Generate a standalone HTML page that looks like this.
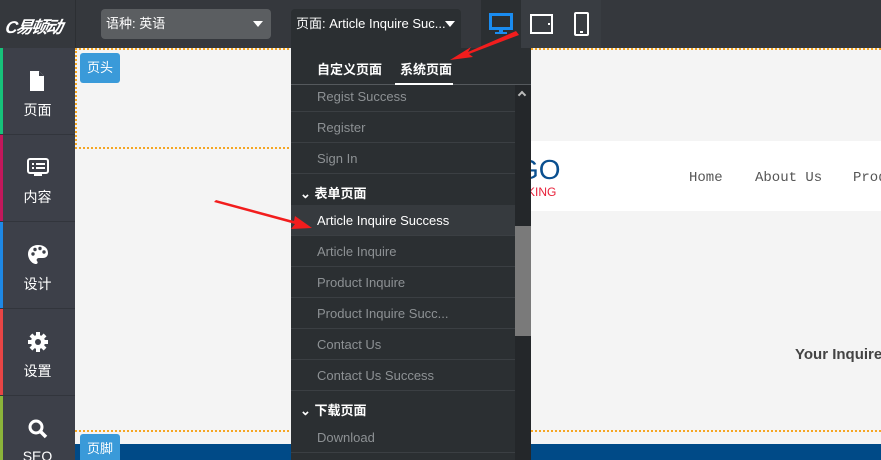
<!DOCTYPE html>
<html style="width:881px;height:460px;overflow:hidden"><head><meta charset="utf-8"><style>
*{margin:0;padding:0;box-sizing:border-box}
body{width:881px;height:460px;overflow:hidden;position:relative;background:#f4f4f4;font-family:"Liberation Sans","Noto Sans CJK SC",sans-serif}
.abs{position:absolute}
.top{left:0;top:0;width:881px;height:48px;background:#35383d}
.side{left:0;top:48px;width:75px;height:412px;background:#3d4049}
.si{position:absolute;left:0;width:75px;height:87px;border-bottom:1px solid #32353c;color:#fff;font-size:14px;text-align:center;overflow:hidden}
.si .bar{position:absolute;left:0;top:0;width:3px;height:100%}
.si svg{position:absolute;left:27px;top:22px}
.si span{position:absolute;left:0;width:75px;top:52px}
.lbl{background:#3a9ad9;color:#fff;font-size:13px;width:40px;height:30px;line-height:30px;text-align:center;border-radius:3px}
.panel{left:291px;top:48px;width:240px;height:412px;background:#2b2f32;overflow:hidden}
.it{position:absolute;left:0;width:224px;height:31px;line-height:31px;padding-left:26px;color:#8d9194;font-size:13px;border-bottom:1px solid #3b3f43}
.hd{position:absolute;left:9px;color:#fff;font-size:13px;font-weight:bold}
</style></head><body>
<div class="abs top"></div>
<div class="abs" style="left:75px;top:0;width:1px;height:48px;background:#2c2f33"></div>
<div class="abs" style="left:6px;top:13px;color:#fff;font-style:italic;font-weight:bold;font-size:17px;letter-spacing:-2px;transform:skewX(-10deg)">C<span style="font-family:'Noto Sans CJK SC'">易顿动</span></div>
<div class="abs" style="left:101px;top:9px;width:170px;height:30px;background:#5b5e61;border-radius:4px;color:#fff;font-size:13px;line-height:30px;padding-left:5px">语种: 英语<span class="abs" style="right:8px;top:12px;border:5px solid transparent;border-top:6px solid #fff;border-bottom:0"></span></div>
<div class="abs" style="left:291px;top:9px;width:170px;height:40px;background:#2b2f32;border-radius:4px 4px 0 0;color:#fff;font-size:13px;line-height:30px;padding-left:5px">页面: Article Inquire Suc...<span class="abs" style="right:6px;top:12px;border:5px solid transparent;border-top:6px solid #fff;border-bottom:0"></span></div>
<div class="abs" style="left:481px;top:0;width:40px;height:48px;background:#2b2f32"></div>
<div class="abs" style="left:521px;top:0;width:80px;height:48px;background:#393d42"></div>
<svg class="abs" style="left:489px;top:13px" width="26" height="22"><rect x="1.5" y="1.5" width="21" height="14" fill="none" stroke="#1a8cf0" stroke-width="3"/><rect x="10" y="16" width="4" height="3" fill="#1a8cf0"/><rect x="6" y="19" width="12" height="2" fill="#1a8cf0"/></svg>
<svg class="abs" style="left:530px;top:14px" width="24" height="20"><rect x="1" y="1" width="21" height="18" fill="none" stroke="#fff" stroke-width="2"/><rect x="18" y="9" width="2" height="2" fill="#fff"/></svg>
<svg class="abs" style="left:574px;top:12px" width="16" height="24"><rect x="1" y="1" width="13" height="22" rx="1" fill="none" stroke="#fff" stroke-width="2"/><rect x="2" y="4" width="11" height="14" fill="#393d42"/><rect x="6" y="19" width="3" height="2" fill="#fff"/></svg>
<div class="abs side"></div>
<div class="si" style="top:48px"><div class="bar" style="background:#17c27a"></div><svg width="20" height="22"><path d="M3 1h9l5 5v15H3z" fill="#fff"/><path d="M12 1v5h5" fill="#3d4049"/></svg><span>页面</span></div>
<div class="si" style="top:135px"><div class="bar" style="background:#c2185b"></div><svg width="22" height="22"><rect x="1" y="2" width="20" height="14" rx="2" fill="none" stroke="#fff" stroke-width="2"/><rect x="5" y="6" width="2" height="2" fill="#fff"/><rect x="9" y="6" width="9" height="2" fill="#fff"/><rect x="5" y="10" width="2" height="2" fill="#fff"/><rect x="9" y="10" width="9" height="2" fill="#fff"/><rect x="7" y="17" width="8" height="2" fill="#fff"/></svg><span>内容</span></div>
<div class="si" style="top:222px"><div class="bar" style="background:#1e88e5"></div><svg width="22" height="22"><path d="M11 1C5 1 1 5 1 10c0 5 4 10 8 10 2 0 2-2 1-3s0-3 2-3h4c3 0 5-2 5-5 0-5-4-8-10-8z" fill="#fff"/><circle cx="6" cy="10" r="1.7" fill="#3d4049"/><circle cx="8" cy="5.5" r="1.7" fill="#3d4049"/><circle cx="13" cy="4.5" r="1.7" fill="#3d4049"/><circle cx="17" cy="8" r="1.7" fill="#3d4049"/></svg><span>设计</span></div>
<div class="si" style="top:309px"><div class="bar" style="background:#e84545"></div><svg width="22" height="22"><g transform="translate(11 11)" fill="#fff"><circle r="7"/><rect x="-2" y="-10" width="4" height="20"/><rect x="-2" y="-10" width="4" height="20" transform="rotate(45)"/><rect x="-2" y="-10" width="4" height="20" transform="rotate(90)"/><rect x="-2" y="-10" width="4" height="20" transform="rotate(135)"/><circle r="3" fill="#3d4049"/></g></svg><span>设置</span></div>
<div class="si" style="top:396px;height:64px;border:0"><div class="bar" style="background:#8bb43a"></div><svg width="22" height="22"><circle cx="9" cy="9" r="6" fill="none" stroke="#fff" stroke-width="3"/><path d="M13 13l6 6" stroke="#fff" stroke-width="3.5"/></svg><span>SEO</span></div>
<div class="abs" style="left:75px;top:48px;width:806px;height:101px;border:2px dotted #f5a623;border-right:0"></div>
<div class="abs lbl" style="left:80px;top:53px">页头</div>
<div class="abs" style="left:531px;top:141px;width:350px;height:70px;background:#fff"></div>
<div class="abs" style="left:517px;top:154px;color:#0a4f8f;font-size:28px">GO</div>
<div class="abs" style="left:527px;top:185px;color:#e8213a;font-size:12px">KING</div>
<div class="abs" style="top:170px;left:689px;font-family:'Liberation Mono',monospace;font-size:14px;color:#555">Home</div>
<div class="abs" style="top:170px;left:755px;font-family:'Liberation Mono',monospace;font-size:14px;color:#555">About Us</div>
<div class="abs" style="top:170px;left:853px;font-family:'Liberation Mono',monospace;font-size:14px;color:#555">Products</div>
<div class="abs" style="top:346px;left:795px;font-size:15px;font-weight:bold;color:#444;white-space:nowrap">Your Inquire</div>
<div class="abs" style="left:75px;top:430px;width:806px;height:2px;border-top:2px dotted #f5a623"></div>
<div class="abs" style="left:75px;top:444px;width:806px;height:16px;background:#004a87"></div>
<div class="abs lbl" style="left:80px;top:434px">页脚</div>
<div class="abs panel">
<div class="abs" style="left:26px;top:11px;color:#fff;font-size:13px;font-weight:bold">自定义页面</div>
<div class="abs" style="left:109px;top:11px;color:#fff;font-size:13px;font-weight:bold">系统页面</div>
<div class="abs" style="left:0;top:36px;width:240px;height:1px;background:#55595d"></div>
<div class="abs" style="left:104px;top:35px;width:58px;height:2px;background:#fff"></div>
<div class="abs" style="left:224px;top:37px;width:16px;height:375px;background:#24272a"></div>
<div class="abs" style="left:224px;top:178px;width:16px;height:110px;background:#7a7a7a"></div>
<div class="abs" style="left:228px;top:44px;width:6px;height:6px;border-left:2px solid #bbb;border-top:2px solid #bbb;transform:rotate(45deg)"></div>
<div class="it" style="top:33px">Regist Success</div>
<div class="it" style="top:64px">Register</div>
<div class="it" style="top:95px">Sign In</div>
<div class="hd" style="top:135px">⌄ 表单页面</div>
<div class="it" style="top:157px;background:#363a3e;color:#fff">Article Inquire Success</div>
<div class="it" style="top:188px">Article Inquire</div>
<div class="it" style="top:219px">Product Inquire</div>
<div class="it" style="top:250px">Product Inquire Succ...</div>
<div class="it" style="top:281px">Contact Us</div>
<div class="it" style="top:312px">Contact Us Success</div>
<div class="hd" style="top:352px">⌄ 下载页面</div>
<div class="it" style="top:374px">Download</div>
</div>
<svg class="abs" style="left:0;top:0" width="881" height="460"><path d="M516 31L468 52 471 47 450 60 473 57 469 54 519 35z" fill="#f21d1d"/><path d="M214 202L295 224 291 229 312 228 295 216 294 221 216 200z" fill="#f21d1d"/></svg>
</body></html>
